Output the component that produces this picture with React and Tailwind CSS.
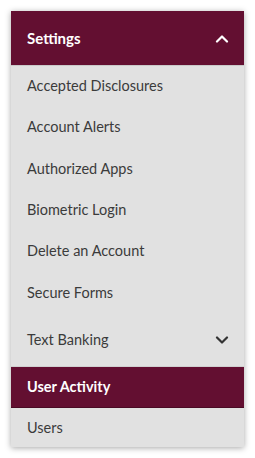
import React from "react";

const items = [
  "Accepted Disclosures",
  "Account Alerts",
  "Authorized Apps",
  "Biometric Login",
  "Delete an Account",
  "Secure Forms",
];

function Chevron({ up, className }) {
  return (
    <svg width="14" height="9" viewBox="0 0 14 9" className={className}>
      <path
        d={up ? "M2 7.5 L7 2.5 L12 7.5" : "M2 1.5 L7 6.5 L12 1.5"}
        fill="none"
        stroke="currentColor"
        strokeWidth="2.2"
        strokeLinecap="round"
        strokeLinejoin="round"
      />
    </svg>
  );
}

export default function App() {
  return (
    <div className="w-[255px] h-[458px] bg-white p-[11px] font-['Lato',sans-serif]">
      <div className="w-[233px] bg-[#e1e1e1] shadow-[0_1px_6px_rgba(0,0,0,0.35)] flex flex-col">
        <div className="h-[55px] bg-[#630f31] flex items-center justify-between pl-[16px] pr-[15px] border-b border-[#c9c9c9]">
          <span className="text-white text-[15px] font-bold">Settings</span>
          <Chevron up className="text-white" />
        </div>
        {items.map((t) => (
          <div key={t} className="h-[41.4px] flex items-center pl-[16px] pb-[2px] text-[14.5px] text-[#3b3b3b]">
            {t}
          </div>
        ))}
        <div className="h-[53px] flex items-center justify-between pl-[16px] pr-[15px] text-[14.5px] text-[#3b3b3b] border-b border-[#d0d0d0]">
          <span>Text Banking</span>
          <Chevron className="text-[#333]" />
        </div>
        <div className="h-[41px] bg-[#630f31] flex items-center pl-[16px] text-white text-[14.5px] font-bold border-b border-[#4a0a24]">
          User Activity
        </div>
        <div className="h-[39px] flex items-center pl-[16px] text-[14.5px] text-[#3b3b3b]">
          Users
        </div>
      </div>
    </div>
  );
}
